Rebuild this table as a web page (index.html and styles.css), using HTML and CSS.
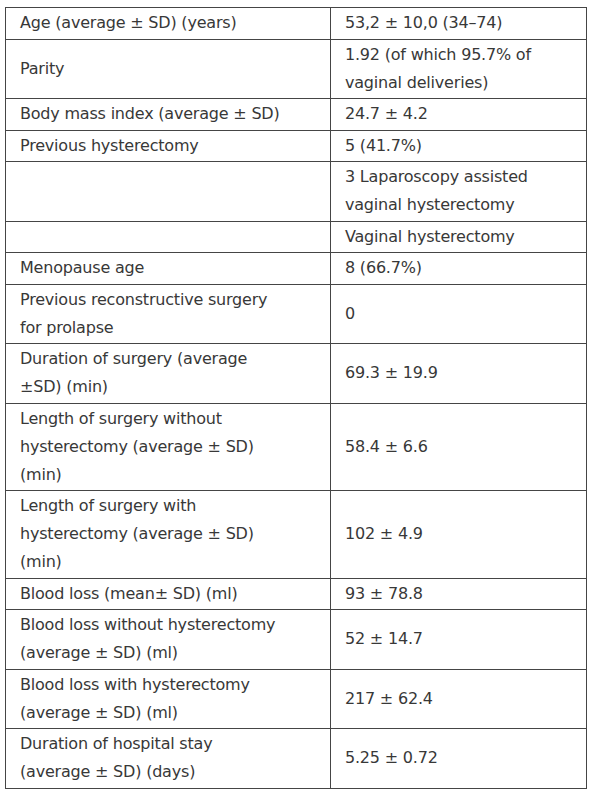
FILE: index.html
```html
<!DOCTYPE html>
<html lang="en">
<head>
    <meta charset="UTF-8">
    <meta name="viewport" content="width=device-width, initial-scale=1.0">
    <title>Patient characteristics</title>
    <link rel="stylesheet" href="styles.css">
</head>
<body>
    <table class="data-table">
        <tr><td>Age (average ± SD) (years)</td><td>53,2 ± 10,0 (34–74)</td></tr>
        <tr><td>Parity</td><td>1.92 (of which 95.7% of<br>vaginal deliveries)</td></tr>
        <tr><td>Body mass index (average ± SD)</td><td>24.7 ± 4.2</td></tr>
        <tr><td>Previous hysterectomy</td><td>5 (41.7%)</td></tr>
        <tr><td></td><td>3 Laparoscopy assisted<br>vaginal hysterectomy</td></tr>
        <tr><td></td><td>Vaginal hysterectomy</td></tr>
        <tr><td>Menopause age</td><td>8 (66.7%)</td></tr>
        <tr><td>Previous reconstructive surgery<br>for prolapse</td><td>0</td></tr>
        <tr><td>Duration of surgery (average<br>±SD) (min)</td><td>69.3 ± 19.9</td></tr>
        <tr><td>Length of surgery without<br>hysterectomy (average ± SD)<br>(min)</td><td>58.4 ± 6.6</td></tr>
        <tr><td>Length of surgery with<br>hysterectomy (average ± SD)<br>(min)</td><td>102 ± 4.9</td></tr>
        <tr><td>Blood loss (mean± SD) (ml)</td><td>93 ± 78.8</td></tr>
        <tr><td>Blood loss without hysterectomy<br>(average ± SD) (ml)</td><td>52 ± 14.7</td></tr>
        <tr><td>Blood loss with hysterectomy<br>(average ± SD) (ml)</td><td>217 ± 62.4</td></tr>
        <tr><td>Duration of hospital stay<br>(average ± SD) (days)</td><td>5.25 ± 0.72</td></tr>
    </table>
</body>
</html>
```

FILE: styles.css
```css
* {
    margin: 0;
    padding: 0;
    box-sizing: border-box;
}

body {
    background-color: #fff;
    color: #383838;
    font-family: 'DejaVu Sans', sans-serif;
    padding: 7px 6px 0 5px;
}

/* Table */
.data-table {
    width: 582px;
    border-collapse: collapse;
    table-layout: fixed;
}

.data-table td {
    border: 1px solid #454545;
    padding: 1px 14px 1.5px;
    font-size: 16px;
    letter-spacing: -0.2px;
    line-height: 28px;
    vertical-align: middle;
    white-space: nowrap;
}

.data-table td:first-child {
    width: 325px;
}
```
